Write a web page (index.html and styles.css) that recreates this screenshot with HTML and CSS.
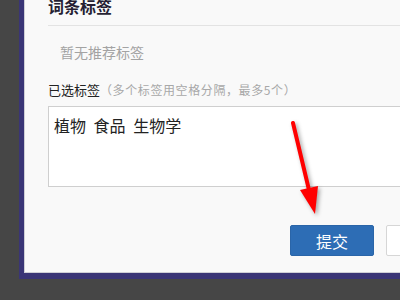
FILE: index.html
```html
<!DOCTYPE html>
<html lang="zh-CN">
<head>
  <meta charset="UTF-8" />
  <meta name="viewport" content="width=device-width, initial-scale=1.0" />
  <title>词条标签</title>
  <link rel="stylesheet" href="styles.css">
</head>
<body>
  <div class="modal">
    <div class="modal-head">
      <h3>词条标签</h3>
    </div>
    <div class="modal-body">
      <p class="empty-tip">暂无推荐标签</p>
      <label class="field-label">已选标签<span class="hint">（多个标签用空格分隔，最多5个）</span></label>
      <div class="tag-input">植物 食品 生物学</div>
    </div>
    <div class="modal-foot">
      <button class="btn btn-primary">提交</button>
      <button class="btn">取消</button>
    </div>
  </div>

  <!-- annotation arrow -->
  <svg class="arrow" width="400" height="300" viewBox="0 0 400 300">
    <line x1="293" y1="123" x2="309" y2="190" stroke="#f00" stroke-width="4" stroke-linecap="round" />
    <polygon points="315,214 300,190 318,186" fill="#f00" />
  </svg>
</body>
</html>
```

FILE: styles.css
```css
body {
  margin: 0;
  background: #464646;
  font-family: "Noto Sans CJK SC", "Noto Sans", sans-serif;
  overflow: hidden;
  width: 400px;
  height: 300px;
}
.modal {
  width: 470px;
  margin-left: 19px;
  background: #f9f9f9;
  border-left: 5px solid #3a3576;
  border-bottom: 6px solid #3a3576;
  box-shadow: inset 1px -1px 0 #cfcfd6;
}
.modal-head {
  display: flow-root;
  height: 25px;
  margin-left: 24px;
  border-bottom: 1px solid #e3e3e3;
}
.modal-head h3 {
  margin: -4px 0 0;
  font-size: 16px;
  line-height: 20px;
  color: #261f33;
}
.modal-body { padding: 0 24px; }
.empty-tip {
  margin: 16px 0 0 12px;
  font-size: 14px;
  line-height: 20px;
  color: #a3a3a3;
}
.field-label {
  display: block;
  margin-top: 18px;
  font-size: 13px;
  line-height: 20px;
  color: #222;
}
.hint { font-size: 12px; letter-spacing: 0.6px; color: #a8a8a8; }
.tag-input {
  margin-top: 6px;
  height: 79px;
  padding: 0 5px;
  border: 1px solid #cfcfcf;
  background: #fff;
  font-size: 16px;
  line-height: 36px;
  word-spacing: 4px;
  color: #222;
}
.modal-foot {
  display: flex;
  justify-content: flex-end;
  gap: 12px;
  padding: 38px 24px 17px;
}
.btn {
  width: 84px;
  height: 31px;
  border: 1px solid #d6d6d6;
  border-radius: 2px;
  background: #fff;
  font-family: inherit;
  font-size: 16px;
  color: #333;
}
.btn-primary {
  background: #2d6db5;
  border-color: #2a65a8;
  color: #fff;
}
.arrow {
  position: absolute;
  left: 0;
  top: 0;
  filter: drop-shadow(2px 2px 2px rgba(0, 0, 0, 0.35));
}
```
